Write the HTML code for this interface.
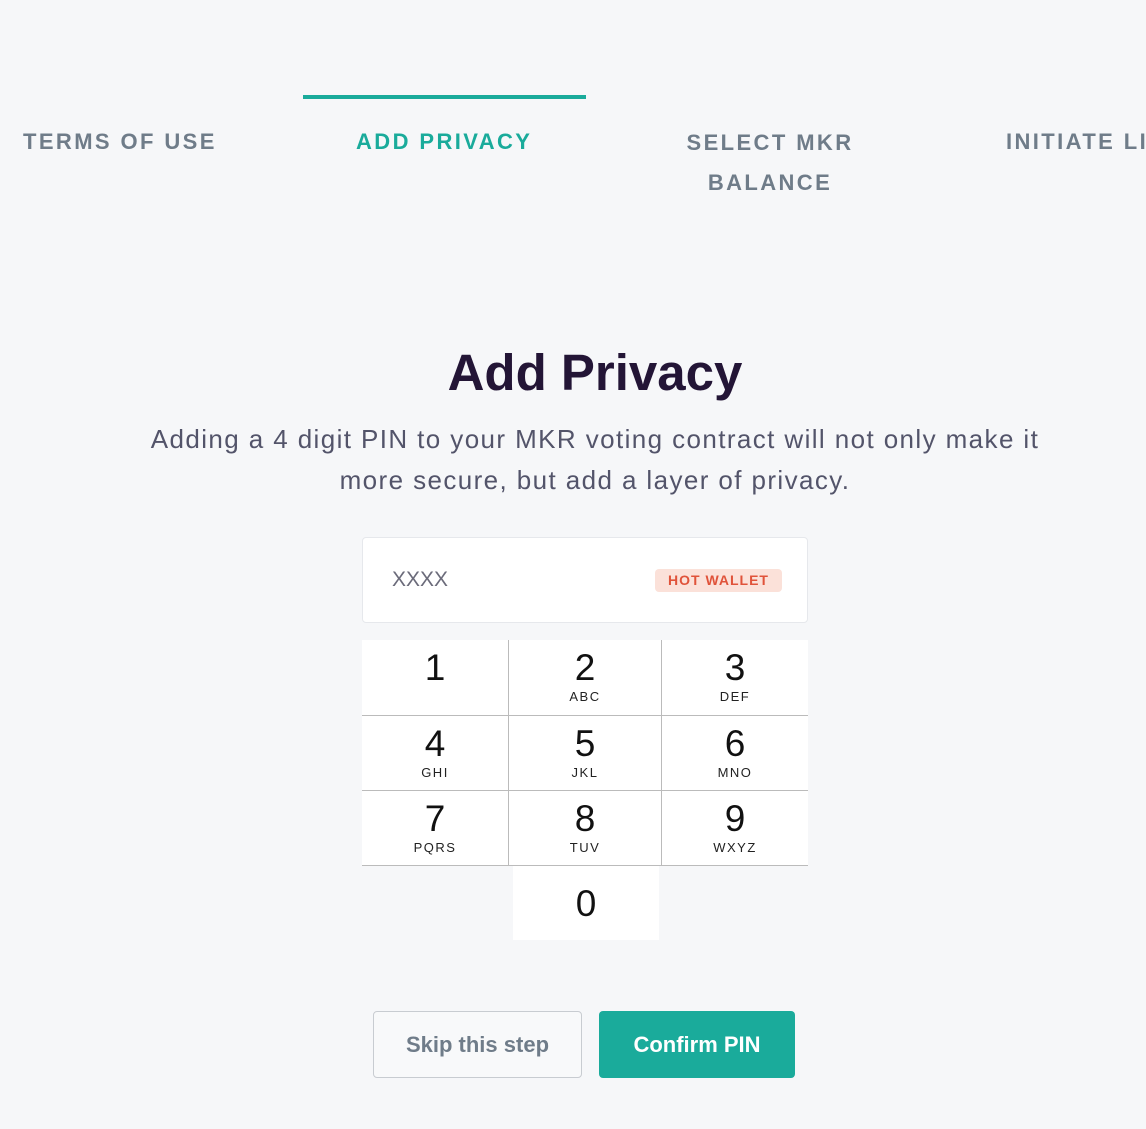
<!DOCTYPE html>
<html><head><meta charset="utf-8"><style>
body{margin:0;width:1146px;height:1129px;background:#f6f7f9;position:relative;overflow:hidden;font-family:"Liberation Sans",sans-serif}
.a{position:absolute;white-space:nowrap}
.tab{font-weight:bold;font-size:22px;letter-spacing:2.4px;color:#6f7c89}
.k{position:absolute;background:#fff;text-align:center;color:#111}
.k .d{font-size:37px;line-height:36px;padding-top:10px;display:block}
.k .l{font-size:13px;letter-spacing:1.5px;display:block;margin-top:3px;color:#222}
</style></head><body>
<div class="a" style="left:303px;top:95px;width:283px;height:4px;background:#1aab9b"></div>
<div class="a tab" style="left:23px;top:129px">TERMS OF USE</div>
<div class="a tab" style="left:356px;top:129px;color:#1aab9b">ADD PRIVACY</div>
<div class="a tab" style="left:640px;top:123px;width:260px;text-align:center;line-height:40px;white-space:normal">SELECT MKR<br>BALANCE</div>
<div class="a tab" style="left:1006px;top:129px">INITIATE LINK</div>
<div class="a" style="left:0;width:1190px;text-align:center;top:343px;font-size:51px;font-weight:bold;color:#231536">Add Privacy</div>
<div class="a" style="left:0;width:1190px;text-align:center;top:419px;font-size:26px;letter-spacing:1.4px;line-height:41px;color:#53546a;white-space:normal">Adding a 4 digit PIN to your MKR voting contract will not only make it<br>more secure, but add a layer of privacy.</div>
<div class="a" style="left:362px;top:537px;width:446px;height:86px;background:#fff;border:1px solid #e6e8ec;border-radius:4px;box-sizing:border-box"></div>
<div class="a" style="left:392px;top:568px;font-size:21px;color:#6b6b7a">XXXX</div>
<div class="a" style="left:655px;top:569px;width:127px;height:23px;background:#fbe1d9;border-radius:4px;color:#e0533a;font-weight:bold;font-size:14px;letter-spacing:1px;text-align:center;line-height:23px">HOT WALLET</div>
<div class="k" style="left:362px;top:640px;width:146px;height:75px"><span class="d">1</span></div>
<div class="k" style="left:509px;top:640px;width:152px;height:75px"><span class="d">2</span><span class="l">ABC</span></div>
<div class="k" style="left:662px;top:640px;width:146px;height:75px"><span class="d">3</span><span class="l">DEF</span></div>
<div class="k" style="left:362px;top:716px;width:146px;height:74px"><span class="d">4</span><span class="l">GHI</span></div>
<div class="k" style="left:509px;top:716px;width:152px;height:74px"><span class="d">5</span><span class="l">JKL</span></div>
<div class="k" style="left:662px;top:716px;width:146px;height:74px"><span class="d">6</span><span class="l">MNO</span></div>
<div class="k" style="left:362px;top:791px;width:146px;height:74px"><span class="d">7</span><span class="l">PQRS</span></div>
<div class="k" style="left:509px;top:791px;width:152px;height:74px"><span class="d">8</span><span class="l">TUV</span></div>
<div class="k" style="left:662px;top:791px;width:146px;height:74px"><span class="d">9</span><span class="l">WXYZ</span></div>
<div class="a" style="left:362px;top:715px;width:446px;height:1px;background:#bbb"></div>
<div class="a" style="left:362px;top:790px;width:446px;height:1px;background:#bbb"></div>
<div class="a" style="left:362px;top:865px;width:446px;height:1px;background:#bbb"></div>
<div class="a" style="left:508px;top:640px;width:1px;height:225px;background:#bbb"></div>
<div class="a" style="left:661px;top:640px;width:1px;height:225px;background:#bbb"></div>
<div class="k" style="left:513px;top:866px;width:146px;height:74px"><span class="d" style="padding-top:20px">0</span></div>
<div class="a" style="left:373px;top:1011px;width:209px;height:67px;border:1px solid #c8ccd1;border-radius:4px;box-sizing:border-box;background:#f8f9fa;text-align:center;line-height:65px;font-size:22px;font-weight:bold;color:#6f7c89">Skip this step</div>
<div class="a" style="left:599px;top:1011px;width:196px;height:67px;border-radius:4px;background:#1aab9b;text-align:center;line-height:67px;font-size:22px;font-weight:bold;color:#fff">Confirm PIN</div>
</body></html>
